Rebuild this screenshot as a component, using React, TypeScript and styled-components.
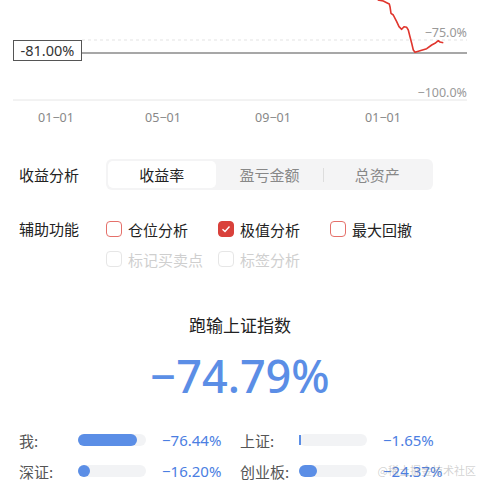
import React from "react";
import styled, { createGlobalStyle } from "styled-components";

const GlobalStyle = createGlobalStyle`
  body {
    margin: 0;
    background: #fff;
    font-family: "Noto Sans", "Noto Sans CJK SC", sans-serif;
    color: #222;
  }
`;

const Page = styled.div`
  position: relative;
  width: 480px;
  height: 480px;
  overflow: hidden;
  background: #fff;
`;

const Chart = styled.svg`
  display: block;
  width: 480px;
  height: 130px;
`;

const OptionRow = styled.div<{ $top: number }>`
  display: flex;
  align-items: flex-start;
  margin-top: ${(p) => p.$top}px;
  padding-left: 19px;
`;

const RowLabel = styled.div<{ $h: number }>`
  width: 87px;
  height: ${(p) => p.$h}px;
  line-height: ${(p) => p.$h}px;
  font-size: 15px;
  color: #222;
  font-family: "Noto Sans CJK SC", sans-serif;
`;

const Segmented = styled.div`
  display: flex;
  align-items: center;
  width: 327px;
  height: 31px;
  padding: 2px;
  box-sizing: border-box;
  background: #f4f4f5;
  border-radius: 6px;
`;

const Segment = styled.div<{ $active?: boolean; $divider?: boolean }>`
  position: relative;
  flex: 1;
  height: 27px;
  line-height: 27px;
  text-align: center;
  font-size: 15px;
  font-family: "Noto Sans CJK SC", sans-serif;
  color: ${(p) => (p.$active ? "#222" : "#888")};
  background: ${(p) => (p.$active ? "#fff" : "transparent")};
  border-radius: 5px;
  &::before {
    content: "";
    display: ${(p) => (p.$divider ? "block" : "none")};
    position: absolute;
    left: 0;
    top: 7px;
    width: 1px;
    height: 14px;
    background: #ddd;
  }
`;

const CheckGrid = styled.div`
  display: grid;
  grid-template-columns: repeat(3, 112px);
  grid-auto-rows: 24px;
  row-gap: 6px;
`;

const CheckItem = styled.div<{ $disabled?: boolean }>`
  display: flex;
  align-items: center;
  gap: 6px;
  font-size: 15px;
  font-family: "Noto Sans CJK SC", sans-serif;
  color: ${(p) => (p.$disabled ? "#cfcfcf" : "#222")};
`;

const Box = styled.span<{ $checked?: boolean; $disabled?: boolean }>`
  display: inline-flex;
  align-items: center;
  justify-content: center;
  width: 16px;
  height: 16px;
  box-sizing: border-box;
  border-radius: 4px;
  border: 1.5px solid
    ${(p) => (p.$disabled ? "#e6e6e6" : p.$checked ? "#d9413b" : "#e5706a")};
  background: ${(p) => (p.$checked ? "#d9413b" : "#fff")};
`;

const Title = styled.div`
  margin-top: 42px;
  height: 24px;
  line-height: 24px;
  text-align: center;
  font-size: 17px;
  font-family: "Noto Sans CJK SC", sans-serif;
  color: #222;
`;

const BigNumber = styled.div`
  margin-top: 12px;
  height: 54px;
  line-height: 54px;
  text-align: center;
  font-size: 45px;
  font-weight: 500;
  font-family: "Noto Sans", sans-serif;
  color: #5b8ee6;
`;

const Stats = styled.div`
  display: grid;
  grid-template-columns: 221px 221px;
  grid-auto-rows: 22px;
  row-gap: 9px;
  margin-top: 26px;
  padding-left: 19px;
`;

const Stat = styled.div`
  display: grid;
  grid-template-columns: 59px 68px auto;
  align-items: center;
`;

const StatLabel = styled.span`
  font-size: 15px;
  color: #555;
  font-family: "Noto Sans CJK SC", sans-serif;
`;

const Track = styled.div`
  display: flex;
  align-items: center;
  height: 12px;
  border-radius: 6px;
  background: #f2f3f5;
`;

const Fill = styled.div<{ $thin?: boolean }>`
  height: ${(p) => (p.$thin ? "10px" : "100%")};
  border-radius: ${(p) => (p.$thin ? "0" : "6px")};
  background: #5b8ee6;
`;

const StatValue = styled.span`
  margin-left: 16px;
  font-size: 15px;
  color: #4b7ee2;
  font-family: "Noto Sans", sans-serif;
`;

const Watermark = styled.div`
  position: absolute;
  right: 4px;
  bottom: 2px;
  font-size: 11px;
  color: rgba(140, 140, 140, 0.4);
  font-family: "Noto Sans CJK SC", sans-serif;
`;

const redLine: [number, number][] = [
  [377.7, 0], [383.3, 1], [386.7, 2.7], [389.3, 4], [390, 6.7], [391, 13.3],
  [393.3, 15], [395, 18.3], [396.7, 21.7], [399, 26.7], [401.7, 29.3],
  [404, 26.7], [406.7, 27.3], [408.3, 30], [410, 36.7], [411.7, 43.3],
  [413.3, 50], [415, 52.3], [420, 50.7], [426.7, 48.7], [431.7, 45],
  [435, 43.3], [438.3, 40.7], [440, 42], [443.3, 42.7],
];

const xTicks = [
  { x: 56, label: "01−01" },
  { x: 163, label: "05−01" },
  { x: 273, label: "09−01" },
  { x: 383, label: "01−01" },
];

const checks = [
  { label: "仓位分析" },
  { label: "极值分析", checked: true },
  { label: "最大回撤" },
  { label: "标记买卖点", disabled: true },
  { label: "标签分析", disabled: true },
];

const stats = [
  { label: "我:", value: "−76.44%", fill: 59 },
  { label: "上证:", value: "−1.65%", fill: 1.5 },
  { label: "深证:", value: "−16.20%", fill: 12 },
  { label: "创业板:", value: "−24.37%", fill: 18 },
];

function ReturnChart() {
  return (
    <Chart viewBox="0 0 480 130">
      <line x1="82" y1="40" x2="467" y2="40" stroke="#e3e3e3" strokeDasharray="3 3" />
      <line x1="13" y1="100" x2="467" y2="100" stroke="#e6e6e6" />
      <line x1="81" y1="53" x2="467" y2="53" stroke="#8a8a8a" strokeWidth="1.5" />
      <polyline
        points={redLine.map((p) => p.join(",")).join(" ")}
        fill="none"
        stroke="#e0352d"
        strokeWidth="1.6"
        strokeLinejoin="round"
      />
      <rect x="13.5" y="40.5" width="68" height="20" fill="#fff" stroke="#555" />
      <text x="47.5" y="56" textAnchor="middle" fontSize="14.5" fill="#333" fontFamily="Noto Sans, sans-serif">
        -81.00%
      </text>
      <text x="467" y="37" textAnchor="end" fontSize="12.5" fill="#999" fontFamily="Noto Sans, sans-serif">
        −75.0%
      </text>
      <text x="467" y="97" textAnchor="end" fontSize="12.5" fill="#999" fontFamily="Noto Sans, sans-serif">
        −100.0%
      </text>
      {xTicks.map((t, i) => (
        <text key={i} x={t.x} y="122" textAnchor="middle" fontSize="12.5" fill="#888" fontFamily="Noto Sans, sans-serif">
          {t.label}
        </text>
      ))}
    </Chart>
  );
}

export default function App() {
  return (
    <Page>
      <GlobalStyle />
      <ReturnChart />

      <OptionRow $top={29}>
        <RowLabel $h={31}>收益分析</RowLabel>
        <Segmented>
          <Segment $active>收益率</Segment>
          <Segment>盈亏金额</Segment>
          <Segment $divider>总资产</Segment>
        </Segmented>
      </OptionRow>

      <OptionRow $top={27}>
        <RowLabel $h={24}>辅助功能</RowLabel>
        <CheckGrid>
          {checks.map((c) => (
            <CheckItem key={c.label} $disabled={c.disabled}>
              <Box $checked={c.checked} $disabled={c.disabled}>
                {c.checked && (
                  <svg width="10" height="10" viewBox="0 0 10 10">
                    <path d="M1.5 5.2 L4 7.5 L8.5 2.5" fill="none" stroke="#fff" strokeWidth="1.4" />
                  </svg>
                )}
              </Box>
              {c.label}
            </CheckItem>
          ))}
        </CheckGrid>
      </OptionRow>

      <Title>跑输上证指数</Title>
      <BigNumber>−74.79%</BigNumber>

      <Stats>
        {stats.map((s) => (
          <Stat key={s.label}>
            <StatLabel>{s.label}</StatLabel>
            <Track>
              <Fill $thin={s.fill < 4} style={{ width: s.fill }} />
            </Track>
            <StatValue>{s.value}</StatValue>
          </Stat>
        ))}
      </Stats>

      <Watermark>@稀土掘金技术社区</Watermark>
    </Page>
  );
}
